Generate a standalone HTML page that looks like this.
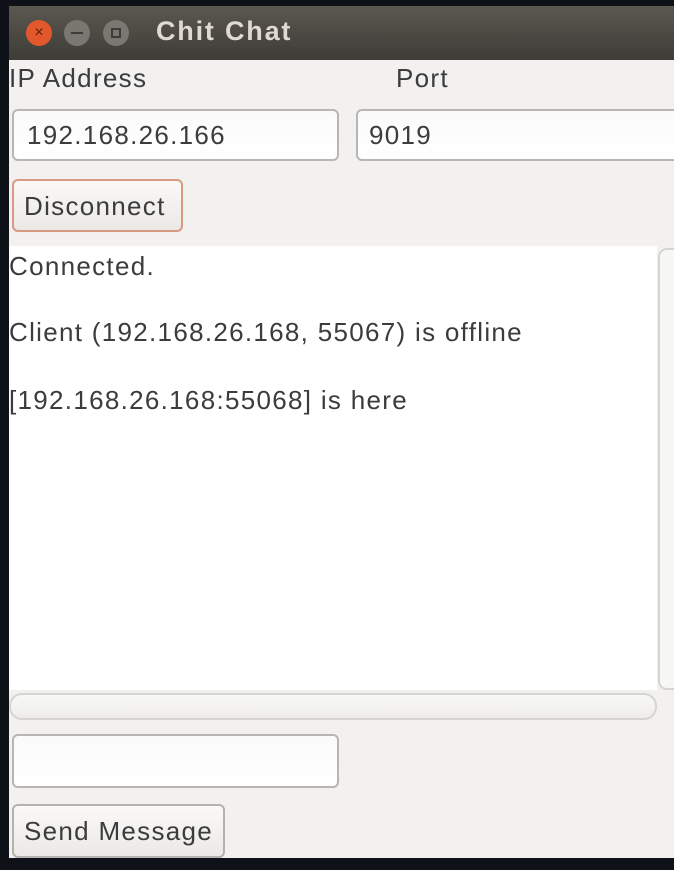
<!DOCTYPE html>
<html><head><style>
body{margin:0;width:674px;height:870px;background:#0e1117;position:relative;overflow:hidden;font-family:"Liberation Sans",sans-serif;color:#3c3c3c}
.win{position:absolute;left:9px;top:6px;width:665px;height:852px;background:#f2f1f0}
.title{position:absolute;left:9px;top:6px;width:665px;height:54px;background:linear-gradient(#5b5850,#3e3c37)}
.b{position:absolute;top:20px;width:26px;height:26px;border-radius:50%}
.t{position:absolute;font-size:26px;letter-spacing:1.3px;white-space:nowrap}
.entry{position:absolute;border:2px solid #b8b6b2;border-radius:6px;background:linear-gradient(#fafafa,#fff);box-sizing:border-box}
.btn{position:absolute;border:2px solid #b5b2ad;border-radius:6px;background:linear-gradient(#faf9f8,#ebe9e6);box-sizing:border-box}
</style></head><body>
<div class="win"></div>
<div class="title"></div>
<div class="b" style="left:26px;background:#e2582c;color:#5a2010;font-size:16px;text-align:center;line-height:26px">×</div>
<div class="b" style="left:64px;background:#7a7771"><div style="position:absolute;left:7px;top:12px;width:12px;height:2px;background:#3e3c38"></div></div>
<div class="b" style="left:103px;background:#7a7771"><div style="position:absolute;left:8px;top:8px;border:2px solid #3e3c38;width:6px;height:6px"></div></div>
<div class="t" style="left:156px;top:16px;color:#dfdbd2;font-weight:bold;font-size:27px;letter-spacing:1.8px">Chit Chat</div>
<div class="t" style="left:9px;top:63px">IP Address</div>
<div class="t" style="left:396px;top:63px">Port</div>
<div class="entry" style="left:12px;top:109px;width:327px;height:52px"></div>
<div class="t" style="left:27px;top:120px">192.168.26.166</div>
<div class="entry" style="left:356px;top:109px;width:330px;height:52px"></div>
<div class="t" style="left:369px;top:120px">9019</div>
<div class="btn" style="left:12px;top:179px;width:171px;height:53px;border-color:#d89a80"></div>
<div class="t" style="left:24px;top:191px">Disconnect</div>
<div style="position:absolute;left:9px;top:246px;width:648px;height:444px;background:#fff"></div>
<div class="t" style="left:9px;top:251px">Connected.</div>
<div class="t" style="left:9px;top:317px">Client (192.168.26.168, 55067) is offline</div>
<div class="t" style="left:9px;top:385px">[192.168.26.168:55068] is here</div>
<div style="position:absolute;left:658px;top:248px;width:24px;height:442px;border:2px solid #d6d4d0;border-radius:9px;background:#f7f7f6;box-sizing:border-box"></div>
<div style="position:absolute;left:9px;top:693px;width:648px;height:27px;border:2px solid #d6d4d0;border-radius:13px;background:linear-gradient(#f8f8f7,#eeedeb);box-sizing:border-box"></div>
<div class="entry" style="left:12px;top:734px;width:327px;height:54px"></div>
<div class="btn" style="left:12px;top:804px;width:213px;height:54px"></div>
<div class="t" style="left:24px;top:816px">Send Message</div>
</body></html>
